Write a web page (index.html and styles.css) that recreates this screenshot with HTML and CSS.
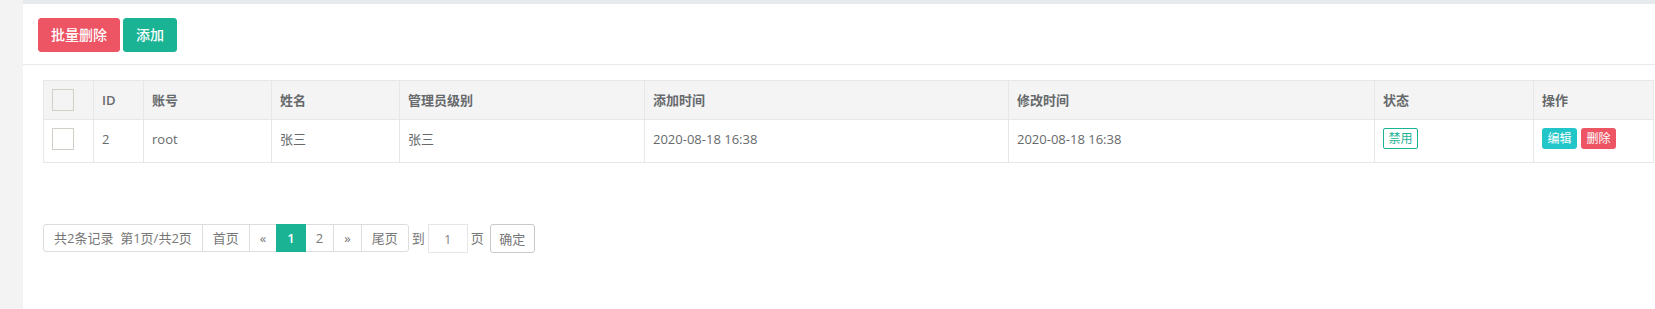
FILE: index.html
```html
<!DOCTYPE html>
<html lang="zh-CN">
<head>
<meta charset="utf-8">
<title>管理员列表</title>
<link rel="stylesheet" href="styles.css">
</head>
<body>
<div class="layout">
  <aside class="side"></aside>
  <main class="main">
    <div class="topbar"></div>
    <div class="toolbar">
      <button class="btn btn-danger">批量删除</button>
      <button class="btn btn-primary">添加</button>
    </div>
    <div class="content">
      <table class="grid">
        <colgroup>
          <col class="c-chk"><col class="c-id"><col class="c-acc"><col class="c-name"><col class="c-level"><col class="c-add"><col class="c-mod"><col class="c-state"><col class="c-op">
        </colgroup>
        <thead>
          <tr>
            <th><span class="chk"></span></th>
            <th>ID</th>
            <th>账号</th>
            <th>姓名</th>
            <th>管理员级别</th>
            <th>添加时间</th>
            <th>修改时间</th>
            <th>状态</th>
            <th>操作</th>
          </tr>
        </thead>
        <tbody>
          <tr>
            <td><span class="chk chk-white"></span></td>
            <td>2</td>
            <td>root</td>
            <td>张三</td>
            <td>张三</td>
            <td>2020-08-18 16:38</td>
            <td>2020-08-18 16:38</td>
            <td><span class="tag">禁用</span></td>
            <td><div class="ops"><span class="xbtn xbtn-info">编辑</span><span class="xbtn xbtn-danger">删除</span></div></td>
          </tr>
        </tbody>
      </table>
      <div class="pager">
        <ul class="pagination">
          <li>共2条记录&nbsp;&nbsp;第1页/共2页</li>
          <li>首页</li>
          <li>«</li>
          <li class="active">1</li>
          <li>2</li>
          <li>»</li>
          <li>尾页</li>
        </ul>
        <span class="goto">到</span>
        <input class="page-input" type="text" value="1">
        <span class="goto-end">页</span>
        <button class="btn-ok">确定</button>
      </div>
    </div>
  </main>
</div>
</body>
</html>
```
FILE: styles.css
```css
html, body {
  margin: 0;
  padding: 0;
  background: #ffffff;
}
body {
  font-family: "Open Sans", "Noto Sans CJK SC", sans-serif;
  font-size: 13px;
  color: #676a6c;
}
.layout {
  display: flex;
  min-height: 309px;
}
.side {
  width: 23px;
  flex: 0 0 23px;
  background: #f3f3f4;
}
.main {
  flex: 1;
  min-width: 0;
}
.topbar {
  height: 4px;
  background: #e7eaec;
}
.toolbar {
  display: flex;
  gap: 3px;
  padding: 14px 15px 12px;
  border-bottom: 1px solid #e7eaec;
}
.btn {
  font-family: "Open Sans", "Noto Sans CJK SC", sans-serif;
  font-size: 14px;
  font-weight: 500;
  line-height: 20px;
  padding: 6px 12px;
  border: 1px solid transparent;
  border-radius: 3px;
  color: #ffffff;
  cursor: pointer;
}
.btn-danger {
  background: #ed5565;
  border-color: #ed5565;
}
.btn-primary {
  background: #1ab394;
  border-color: #1ab394;
}
.content {
  padding: 15px 0 0 20px;
}
.grid {
  border-collapse: collapse;
  table-layout: fixed;
  width: 1610px;
}
.c-chk { width: 50px; }
.c-id { width: 50px; }
.c-acc { width: 128px; }
.c-name { width: 128px; }
.c-level { width: 245px; }
.c-add { width: 364px; }
.c-mod { width: 366px; }
.c-state { width: 159px; }
.c-op { width: 120px; }
.grid th, .grid td {
  border: 1px solid #e7e7e7;
  text-align: left;
  line-height: 22px;
  white-space: nowrap;
}
.grid th {
  background: #f4f4f5;
  font-weight: 600;
  padding: 8px;
  vertical-align: middle;
}
.grid td {
  padding: 8px 8px 12px;
  vertical-align: top;
}
.chk {
  display: block;
  width: 22px;
  height: 22px;
  box-sizing: border-box;
  border: 1px solid #d3cfc8;
}
.chk-white {
  background: #ffffff;
}
.tag {
  display: inline-block;
  vertical-align: top;
  box-sizing: border-box;
  width: 35px;
  height: 21px;
  line-height: 19px;
  font-size: 12px;
  text-align: center;
  color: #1ab394;
  border: 1px solid #1ab394;
  border-radius: 2px;
}
.ops {
  display: flex;
  gap: 4px;
}
.xbtn {
  display: block;
  box-sizing: border-box;
  width: 35px;
  height: 21px;
  line-height: 21px;
  font-size: 12px;
  text-align: center;
  color: #ffffff;
  border-radius: 3px;
}
.xbtn-info {
  background: #23c6c8;
}
.xbtn-danger {
  background: #ed5565;
}
.pager {
  display: flex;
  align-items: flex-start;
  margin-top: 61px;
}
.pagination {
  display: flex;
  list-style: none;
  margin: 0;
  padding: 0;
}
.pagination li {
  padding: 4px 10px;
  line-height: 18px;
  border: 1px solid #dddddd;
  margin-left: -1px;
  color: #777777;
  background: #ffffff;
}
.pagination li:first-child {
  margin-left: 0;
  border-radius: 3px 0 0 3px;
}
.pagination li:last-child {
  border-radius: 0 3px 3px 0;
}
.pagination li.active {
  background: #1ab394;
  border-color: #1ab394;
  color: #ffffff;
  font-weight: 600;
  position: relative;
}
.goto {
  margin-left: 3px;
  line-height: 28px;
  color: #777777;
}
.page-input {
  box-sizing: border-box;
  width: 40px;
  height: 29px;
  margin: 0 3px;
  padding: 0;
  border: 1px solid #e6e6e6;
  text-align: center;
  font-family: "Open Sans", "Noto Sans CJK SC", sans-serif;
  font-size: 13px;
  color: #888888;
  outline: none;
}
.goto-end {
  line-height: 28px;
  color: #777777;
  margin-right: 6px;
}
.btn-ok {
  box-sizing: border-box;
  width: 45px;
  height: 29px;
  padding: 0;
  background: #ffffff;
  border: 1px solid #c9c9c9;
  border-radius: 3px;
  font-family: "Open Sans", "Noto Sans CJK SC", sans-serif;
  font-size: 13px;
  font-weight: 400;
  color: #777777;
}
```
